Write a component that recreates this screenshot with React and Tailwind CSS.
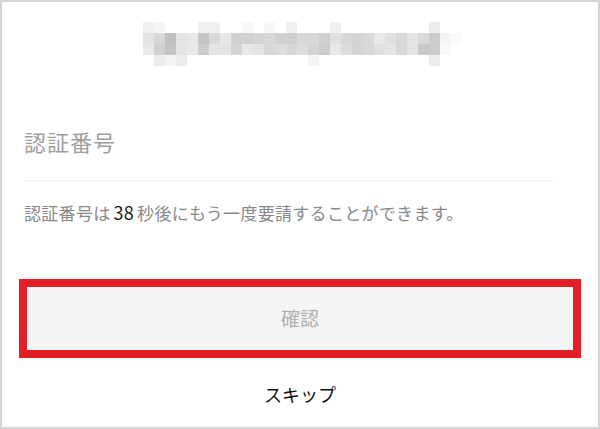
const MOSAIC = [
  ['f0', 'f6', 'ff', 'ff', 'ff', 'f0', 'f0', 'ff', 'ff', 'f8', 'ff', 'f8', 'ff', 'f0', 'ff', 'ff', 'ff', 'f0', 'ff', 'ff', 'ff', 'ff', 'ff', 'ff', 'ff', 'ff', 'ec', 'ff', 'ff'],
  ['e4', 'd8', 'c0', 'e4', 'e8', 'c4', 'd8', 'e8', 'd0', 'd0', 'd4', 'd8', 'd0', 'd0', 'd8', 'd8', 'd0', 'e0', 'd8', 'd4', 'd8', 'e8', 'e0', 'd8', 'e4', 'd8', 'cc', 'f4', 'fa'],
  ['e8', 'd0', 'c4', 'e4', 'e8', 'cc', 'e4', 'e4', 'd4', 'e8', 'e4', 'd8', 'dc', 'd8', 'dc', 'd4', 'cc', 'e8', 'dc', 'd4', 'd8', 'e0', 'e4', 'd8', 'e4', 'c8', 'cc', 'f8', 'ff'],
  ['ff', 'ec', 'f4', 'ec', 'ff', 'ff', 'ff', 'ff', 'ff', 'ff', 'ff', 'ff', 'ff', 'ff', 'ff', 'f4', 'ff', 'ff', 'ff', 'ff', 'ff', 'ff', 'ff', 'ff', 'ff', 'ff', 'ec', 'ff', 'ff'],
]

// ぼかし処理されたメールアドレス
function Mosaic() {
  return (
    <svg width="319" height="44" viewBox="0 0 319 44">
      {MOSAIC.map((row, r) =>
        row.map((v, c) => (
          <rect key={`${r}-${c}`} x={c * 11} y={r * 11} width="11" height="11" fill={`#${v}${v}${v}`} />
        ))
      )}
    </svg>
  )
}

export default function App() {
  return (
    <div className="w-[600px] h-[429px] overflow-hidden border-2 border-[#d4d4d4] bg-white font-['Noto_Sans_CJK_JP','Noto_Sans',sans-serif]">
      <div className="mt-[20px] ml-[141px]">
        <Mosaic />
      </div>

      <div className="px-[22px]">
        <p className="mt-[64px] text-[22px] tracking-[1px] leading-none text-[#9e9e9e]">認証番号</p>
        <div className="mt-[28px] mr-[22px] border-t border-[#efefef]" />
        <p className="mt-[22px] text-[17px] tracking-[0.3px] leading-none text-[#888]">
          認証番号は<span className="mx-[3px] text-[18px] text-[#1a1a1a]">38</span>秒後にもう一度要請することができます。
        </p>
      </div>

      <div className="mt-[58px] ml-[17px] w-[562px] border-[8px] border-[#e31e25]">
        <button className="w-full h-[63px] bg-[#f5f5f5] text-[19px] text-[#b0b0b0]">確認</button>
      </div>

      <p className="mt-[27px] text-center text-[18px] leading-none text-[#111]">スキップ</p>
    </div>
  )
}
